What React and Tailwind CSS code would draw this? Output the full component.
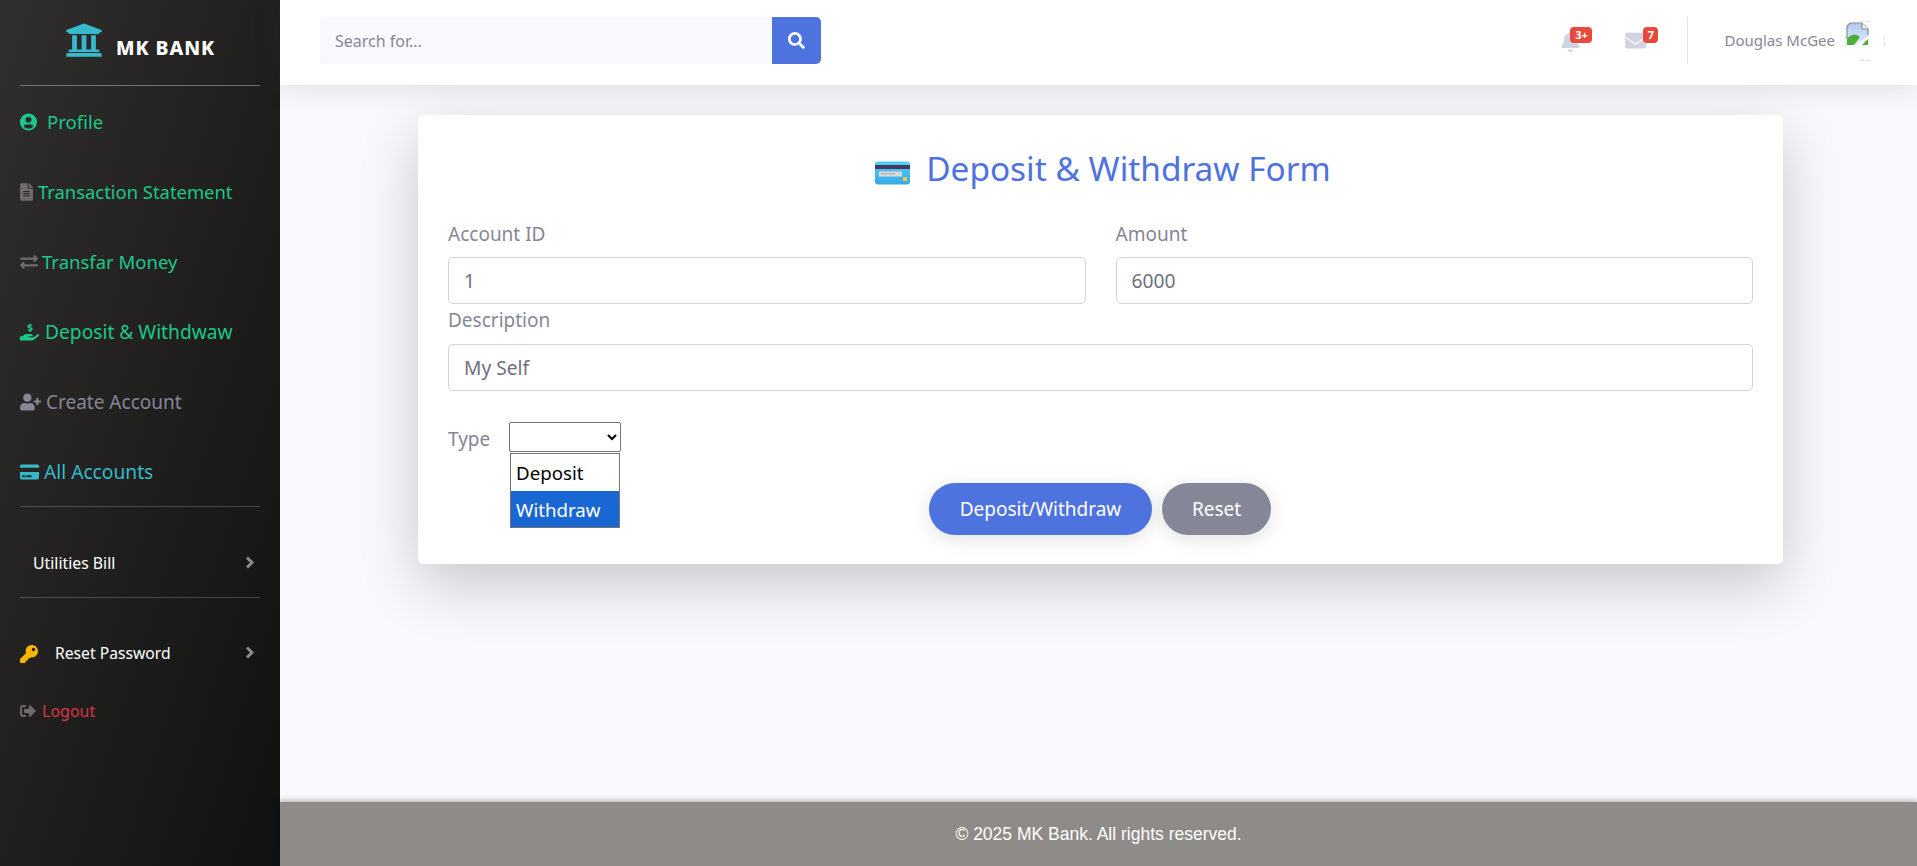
import { FaUniversity, FaUserCircle, FaFileAlt, FaExchangeAlt, FaHandHoldingUsd, FaUserPlus, FaCreditCard, FaKey, FaSignOutAlt, FaSearch, FaBell, FaEnvelope } from 'react-icons/fa'

const navItems = [
  { label: 'Profile', icon: FaUserCircle, iconClass: 'w-[17px] text-[#1cc88a]', gap: 'ml-[10px] text-[18.6px]', text: 'text-[#1cc88a]' },
  { label: 'Transaction Statement', icon: FaFileAlt, iconClass: 'w-[13px] text-[#6b6b6b]', gap: 'ml-[5px] text-[18.4px]', text: 'text-[#1cc88a]' },
  { label: 'Transfar Money', icon: FaExchangeAlt, iconClass: 'w-[18px] text-[#6b6b6b]', gap: 'ml-[4px] text-[18.5px]', text: 'text-[#1cc88a]' },
  { label: 'Deposit & Withdwaw', icon: FaHandHoldingUsd, iconClass: 'w-[19px] text-[#1cc88a]', gap: 'ml-[6px] text-[19.2px]', text: 'text-[#1cc88a]' },
  { label: 'Create Account', icon: FaUserPlus, iconClass: 'w-[21px] text-[#858796]', gap: 'ml-[5px] text-[19px]', text: 'text-[#858796]' },
  { label: 'All Accounts', icon: FaCreditCard, iconClass: 'w-[19px] text-[#36b9cc]', gap: 'ml-[5px] text-[19.2px]', text: 'text-[#36b9cc]' },
]

function Chevron({ className }) {
  return (
    <svg viewBox="0 0 9 13" fill="none" className={`w-[9px] h-[13px] -mt-[4px] ${className || ''}`}>
      <path d="M2 1.5l5 5-5 5" stroke="#8c8c8c" strokeWidth="3" />
    </svg>
  )
}

function Sidebar() {
  return (
    <aside className="w-[280px] shrink-0 h-full bg-gradient-to-br from-[#302f2d] to-[#111111]">
      <div className="h-[85px] flex items-center pl-[65px]">
        <FaUniversity className="w-[38px] h-[38px] text-[#36b9cc] -mt-[6px]" />
        <span className="ml-[13px] mt-[11px] text-[19.4px] font-extrabold tracking-[0.05em] text-white">MK BANK</span>
      </div>
      <div className="mx-5 h-px bg-white/35" />
      {navItems.map(item => {
        const Icon = item.icon
        return (
          <div key={item.label} className="h-[70px] pt-[2px] flex items-center pl-5">
            <Icon className={`${item.iconClass} h-[18px] shrink-0`} />
            <span className={`${item.gap} ${item.text}`}>{item.label}</span>
          </div>
        )
      })}
      <div className="mx-5 h-px bg-white/20" />
      <div className="h-[90px] pt-6 pl-[33px] pr-[26px] flex items-center justify-between text-white text-[15.8px]">
        <span>Utilities Bill</span>
        <Chevron />
      </div>
      <div className="mx-5 h-px bg-white/20" />
      <div className="mt-[38px] h-9 pl-5 pr-[26px] flex items-center text-white text-[15.7px]">
        <FaKey className="w-[18px] h-[18px] text-[#f7b500]" />
        <span className="ml-[17px]">Reset Password</span>
        <Chevron className="ml-auto" />
      </div>
      <div className="mt-[21px] h-9 pl-5 flex items-center text-base">
        <FaSignOutAlt className="w-4 h-4 text-[#6b6b6b]" />
        <span className="ml-[6px] text-[#dc3545]">Logout</span>
      </div>
    </aside>
  )
}

// avatar img failed to load in the reference: broken image icon + bits of the round border
function BrokenAvatar() {
  return (
    <svg viewBox="0 0 40 40" fill="none" className="ml-[10px] w-10 h-10">
      <path d="M15 .6a20 20 0 0 1 10 0M.6 15a20 20 0 0 0 0 10M39.4 15a20 20 0 0 1 0 10M15 39.4a20 20 0 0 0 10 0" stroke="#dcdce8" />
      <defs>
        <linearGradient id="sky" x1="0" y1="0" x2="0" y2="1">
          <stop offset="0" stopColor="#a9c9f2" />
          <stop offset="1" stopColor="#e4eefb" />
        </linearGradient>
      </defs>
      <path d="M5 2h12l6 6v7L11 24H2V5z" fill="url(#sky)" />
      <path d="M2 24v-6c4-5 8-6 13-2l-6 8z" fill="#4caf3c" />
      <path d="M17 24l6-6v6z" fill="#4caf3c" />
      <path d="M2 18V5l3-3h12l6 6v6" stroke="#8d8d8d" strokeWidth="1.2" />
      <path d="M17 2v6h6" fill="#f4f4f4" stroke="#8d8d8d" strokeWidth="1.2" />
    </svg>
  )
}

function Topbar() {
  return (
    <header className="relative z-10 h-[85px] shrink-0 bg-white flex items-center pl-10 pr-8 pb-1 shadow-[0_2px_28px_rgba(58,59,69,0.15)]">
      <div className="flex w-[501px] h-[47px]">
        <input
          placeholder="Search for..."
          className="flex-1 min-w-0 bg-[#f8f9fc] rounded-l-[5px] pl-[15px] text-base text-[#858796] placeholder:text-[#858796] outline-none"
        />
        <button className="w-[49px] bg-[#4e73df] rounded-r-[5px] flex items-center justify-center">
          <FaSearch className="w-[17px] h-[17px] text-white" />
        </button>
      </div>
      <div className="ml-auto flex items-center">
        <div className="relative w-[19px] h-[21px] mt-[2px]">
          <FaBell className="w-[19px] h-[21px] text-[#d1d3e2]" />
          <span className="absolute -top-[4px] left-[9px] w-[22px] h-4 rounded-[4px] bg-[#e74a3b] text-white text-[11px] font-bold flex items-center justify-center">3+</span>
        </div>
        <div className="relative ml-[45px] w-[21px] h-[21px]">
          <FaEnvelope className="w-[21px] h-[21px] text-[#d1d3e2]" />
          <span className="absolute -top-[3px] left-[18px] w-[15px] h-4 rounded-[4px] bg-[#e74a3b] text-white text-[11px] font-bold flex items-center justify-center">7</span>
        </div>
        <div className="ml-[41px] w-px h-[47px] bg-[#e3e6f0]" />
        <span className="ml-9 text-[15px] text-[#858796]">Douglas McGee</span>
        <BrokenAvatar />
      </div>
    </header>
  )
}

function CardEmoji() {
  return (
    <svg viewBox="0 0 35 24" className="w-[35px] h-6 mt-[10px]">
      <defs>
        <linearGradient id="cardFill" x1="0" y1="0" x2="0" y2="1">
          <stop offset="0" stopColor="#4fd0f0" />
          <stop offset="1" stopColor="#38a8e8" />
        </linearGradient>
      </defs>
      <rect width="35" height="23" y="0.5" rx="3" fill="url(#cardFill)" />
      <rect y="4" width="35" height="4" fill="#4a3560" />
      <rect x="4" y="10.5" width="23" height="5" fill="#dcdcdc" />
      <rect x="6" y="12" width="14" height="1.5" fill="#b5b5b5" />
      <rect x="28" y="16" width="4" height="4" fill="#f5c93a" />
    </svg>
  )
}

function Field({ label, value, gap }) {
  return (
    <div>
      <label className={`block text-[19px] leading-[26px] text-[#858796] ${gap}`}>{label}</label>
      <input
        defaultValue={value}
        className="w-full h-[47px] px-[15px] border border-[#d1d3e2] rounded-[5px] text-[19.2px] text-[#6e707e] bg-white outline-none"
      />
    </div>
  )
}

function DepositForm() {
  return (
    <section className="ml-[138px] w-[1365px] h-[449px] bg-white rounded-[5px] px-[30px] shadow-[0_20px_60px_rgba(0,0,0,0.2)]">
      <h1 className="h-[106px] pl-[5px] flex items-center justify-center text-[33.4px] text-[#4e73df]">
        <CardEmoji />
        <span className="ml-4">Deposit &amp; Withdraw Form</span>
      </h1>
      <div className="grid grid-cols-2 gap-x-[30px]">
        <Field label="Account ID" value="1" gap="mb-[10px]" />
        <Field label="Amount" value="6000" gap="mb-[10px]" />
      </div>
      <div className="mt-[3px]">
        <Field label="Description" value="My Self" gap="mb-[11px]" />
      </div>
      <div className="relative mt-[31px] h-[30px] flex items-center">
        <label className="mt-[4px] text-[19px] text-[#858796]">Type</label>
        <select className="absolute left-[61px] top-0 w-[112px] h-[30px] border border-[#767676] rounded-[2px] bg-white">
          <option></option>
        </select>
        <ul className="absolute left-[62px] top-[31px] w-[110px] border border-[#767676] bg-white text-[18.7px] text-black">
          <li className="h-[37px] pt-[2px] pl-[5px] flex items-center">Deposit</li>
          <li className="h-9 pt-[2px] pl-[5px] flex items-center bg-[#1967d2] text-white">Withdraw</li>
        </ul>
      </div>
      <div className="mt-[31px] pr-[1px] flex justify-center gap-[10px]">
        <button className="w-[223px] h-[52px] rounded-full bg-[#4e73df] text-white text-[19px] shadow-[0_4px_20px_rgba(0,0,0,0.12)]">Deposit/Withdraw</button>
        <button className="w-[109px] h-[52px] rounded-full bg-[#858796] text-white text-[19px] shadow-[0_4px_20px_rgba(0,0,0,0.12)]">Reset</button>
      </div>
    </section>
  )
}

export default function App() {
  return (
    <div className="flex h-screen overflow-hidden font-['Noto_Sans',sans-serif]">
      <Sidebar />
      <div className="flex-1 min-w-0 flex flex-col bg-[#f8f9fc]">
        <Topbar />
        <main className="flex-1 pt-[30px]">
          <DepositForm />
        </main>
        <footer className="h-16 shrink-0 bg-[#8f8b89] flex items-center justify-center text-white text-[17.5px] font-['Liberation_Sans',sans-serif] shadow-[0_-2px_5px_rgba(0,0,0,0.25)]">
          © 2025 MK Bank. All rights reserved.
        </footer>
      </div>
    </div>
  )
}
